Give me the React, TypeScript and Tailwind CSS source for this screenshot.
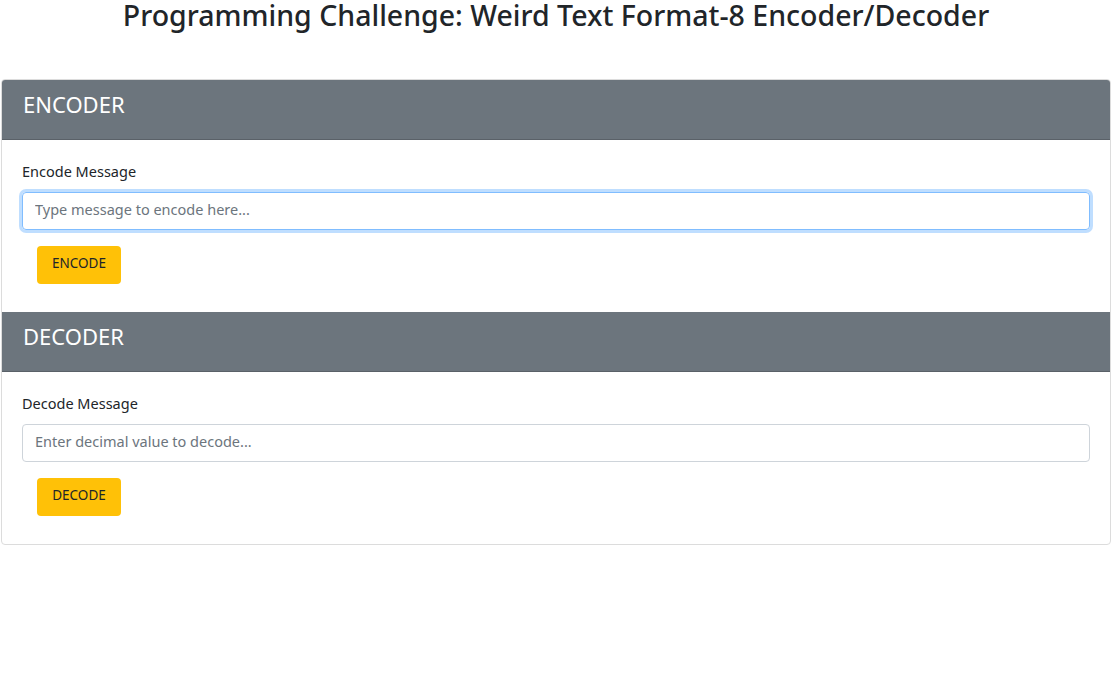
import React from "react";

function Section({
  title,
  label,
  placeholder,
  button,
  focused,
}: {
  title: string;
  label: string;
  placeholder: string;
  button: string;
  focused?: boolean;
}) {
  return (
    <>
      <div className="h-[60px] bg-[#6c757d] border-b border-[#5a6168] px-[21px] pt-[13px]">
        <h2 className="text-[22px] text-white leading-none">{title}</h2>
      </div>
      <div className="px-5 pt-[21px] pb-[28px]">
        <label className="block text-[14.5px] text-[#212529] leading-[20px] mb-[11px]">{label}</label>
        <input
          type="text"
          placeholder={placeholder}
          className={
            focused
              ? "block w-full h-[38px] rounded-[4px] border border-[#80bdff] shadow-[0_0_0_3px_rgba(0,123,255,0.25)] px-3 pb-[4px] text-[14.5px] text-[#495057] placeholder:text-[#6c757d] outline-none"
              : "block w-full h-[38px] rounded-[4px] border border-[#ced4da] px-3 pb-[4px] text-[14.5px] text-[#495057] placeholder:text-[#6c757d] outline-none"
          }
        />
        <button className="mt-4 ml-[15px] h-[38px] w-[84px] rounded-[4px] bg-[#ffc107] text-[13.5px] text-[#212529] pb-[3px]">
          {button}
        </button>
      </div>
    </>
  );
}

export default function App() {
  return (
    <div className="min-h-[689px] bg-white font-['Noto_Sans',sans-serif] text-[#212529]">
      <div className="w-[1110px] ml-[1px]">
        <h1 className="text-center text-[28.5px] font-medium leading-[30px] text-[#212529]">
          Programming Challenge: Weird Text Format-8 Encoder/Decoder
        </h1>
        <div className="mt-[49px] border border-[#dcdcdc] rounded-[4px] overflow-hidden">
          <Section
            title="ENCODER"
            label="Encode Message"
            placeholder="Type message to encode here..."
            button="ENCODE"
            focused
          />
          <Section
            title="DECODER"
            label="Decode Message"
            placeholder="Enter decimal value to decode..."
            button="DECODE"
          />
        </div>
      </div>
    </div>
  );
}
